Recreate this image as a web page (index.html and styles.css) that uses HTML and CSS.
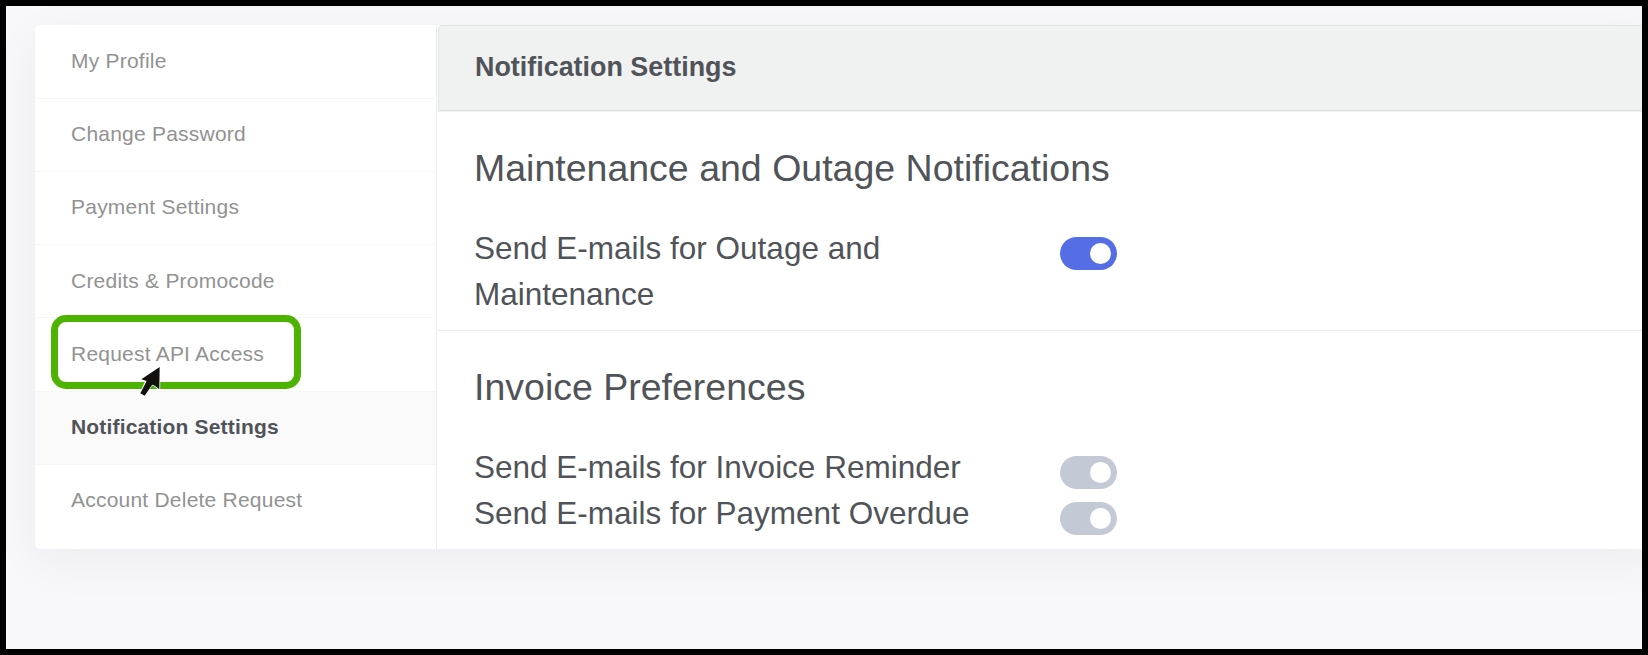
FILE: index.html
```html
<!DOCTYPE html>
<html lang="en">
<head>
<meta charset="utf-8">
<title>Notification Settings</title>
<link rel="stylesheet" href="styles.css">
</head>
<body>
<div class="page">
  <div class="card">
    <nav class="menu">
      <a class="menu-item">My Profile</a>
      <a class="menu-item">Change Password</a>
      <a class="menu-item">Payment Settings</a>
      <a class="menu-item">Credits &amp; Promocode</a>
      <a class="menu-item">Request API Access
        <span class="highlight"></span>
        <svg class="pointer" width="28" height="36" viewBox="0 0 84 108">
          <path d="M68 12 L14 49 L27 55 L10 91 L22 98 L44 65 L48 64 L67 79 Z" fill="none" stroke="#fff" stroke-width="5"/>
          <path d="M68 12 L13 49 L29 54 L10 91 L23 98 L45 66 Q48 64 51 67 L67 79 Z" fill="#11100f"/>
        </svg>
      </a>
      <a class="menu-item active">Notification Settings</a>
      <a class="menu-item">Account Delete Request</a>
    </nav>
    <main class="content">
      <header class="content-header">Notification Settings</header>
      <section class="group">
        <h2 class="group-title">Maintenance and Outage Notifications</h2>
        <div class="row"><span class="label">Send E-mails for Outage and Maintenance</span><span class="toggle on"></span></div>
      </section>
      <section class="group">
        <h2 class="group-title">Invoice Preferences</h2>
        <div class="row"><span class="label">Send E-mails for Invoice Reminder</span><span class="toggle"></span></div>
        <div class="row"><span class="label">Send E-mails for Payment Overdue</span><span class="toggle"></span></div>
      </section>
    </main>
  </div>
</div>
</body>
</html>
```
FILE: styles.css
```css
* { box-sizing: border-box; }
body {
  margin: 0;
  font-family: "Liberation Sans", Arial, sans-serif;
  color: #505358;
}
.page {
  height: 655px;
  border: 6px solid #000;
  background: #f8f8fb;
  padding: 19px 0 0 29px;
  overflow: hidden;
}
.card {
  display: flex;
  width: 1620px;
  height: 524px;
  background: #fff;
  border-radius: 5px;
  box-shadow: 0 12px 48px rgba(40, 42, 46, 0.055);
}
.menu {
  width: 402px;
  flex: none;
  padding-top: 0.7px;
  border-right: 1px solid #ebebed;
}
.menu-item {
  position: relative;
  display: flex;
  align-items: center;
  height: 73.2px;
  margin-right: -2px;
  padding: 0 36px 1.5px;
  border-bottom: 1px solid #f6f6f7;
  font-size: 21px;
  letter-spacing: 0.22px;
  color: #929292;
}
.menu-item:last-child { border-bottom-color: transparent; }
.menu-item.active {
  margin-right: 0;
  background: #fafafb;
  font-weight: bold;
  letter-spacing: 0.17px;
  color: #505358;
}
.highlight {
  position: absolute;
  z-index: 1;
  left: 16px;
  top: -3px;
  width: 250px;
  height: 74px;
  border: 7px solid #4cb400;
  border-radius: 15px;
}
.pointer {
  position: absolute;
  z-index: 2;
  left: 102.2px;
  top: 44.5px;
}
.content {
  flex: 1;
  margin-left: 1px;
}
.content-header {
  display: flex;
  align-items: center;
  height: 86px;
  padding: 0 36px 1px;
  background: #f0f2f1;
  border: 1px solid #e2e4e5;
  border-radius: 4px 0 0 0;
  box-shadow: 0 1px 0 #f0f2f1;
  margin-bottom: 1px;
  font-size: 26.9px;
  font-weight: bold;
}
.group { padding: 33px 0 13px 36px; }
.group + .group { border-top: 1px solid #ededef; }
.group-title {
  margin: 0 0 34px;
  font-size: 37.5px;
  line-height: 46px;
  font-weight: normal;
}
.row { display: flex; }
.label {
  width: 586px;
  padding-right: 72px;
  font-size: 31.5px;
  line-height: 46px;
}
.toggle {
  display: flex;
  align-items: center;
  justify-content: flex-end;
  width: 57px;
  height: 33px;
  margin-top: 12px;
  padding-right: 6px;
  border-radius: 17px;
  background: #c4cad5;
}
.toggle::after {
  content: "";
  width: 21px;
  height: 21px;
  border-radius: 50%;
  background: #fff;
}
.toggle.on { background: #556ee6; }
```
